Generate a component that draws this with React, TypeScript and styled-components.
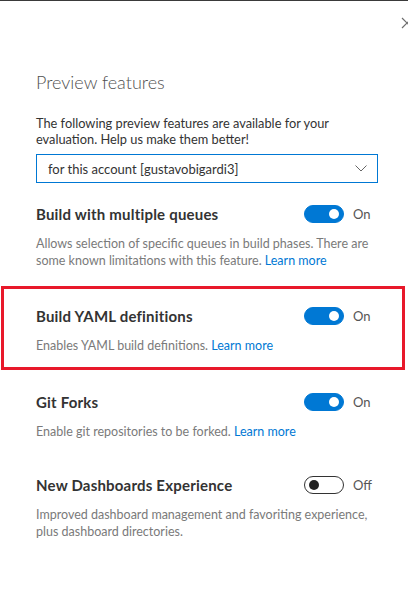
import React from "react";
import styled, { createGlobalStyle } from "styled-components";

const Global = createGlobalStyle`
  html, body { margin: 0; padding: 0; background: #ffffff; }
  body { width: 408px; height: 600px; overflow: hidden; font-family: Lato, "Open Sans", sans-serif; }
`;

const Panel = styled.div`
  position: relative;
  box-sizing: border-box;
  width: 408px;
  height: 600px;
  border-top: 1px solid #3a3a3a;
  padding: 69px 30px 0 36px;
  background: #fff;
  overflow: hidden;
`;

const CloseButton = styled.div`
  position: absolute;
  top: 12px;
  right: -5px;
  width: 12px;
  height: 12px;
  color: #6e6e6e;
`;

const Title = styled.h1`
  margin: 0;
  font-family: Lato, sans-serif;
  font-weight: 300;
  font-size: 18px;
  line-height: 24px;
  color: #505050;
`;

const Intro = styled.p`
  margin: 21px 0 0;
  font-size: 12.8px;
  line-height: 16px;
  color: #333;
`;

const Dropdown = styled.div`
  margin-top: 7px;
  box-sizing: border-box;
  height: 29px;
  border: 1px solid #0078d4;
  display: flex;
  align-items: center;
  justify-content: space-between;
  padding: 0 10px 0 11px;
  font-size: 13px;
  color: #333;
`;

const Feature = styled.section<{ $highlight?: boolean; $top: number }>`
  margin-top: ${(p) => p.$top}px;
  ${(p) =>
    p.$highlight
      ? `margin-left: -35px; margin-right: -27px; padding: 17px 24px 12px 32px; border: 3px solid #e8182a;`
      : ``}
`;

const FeatureHead = styled.div`
  display: flex;
  align-items: center;
  justify-content: space-between;
  height: 20px;
`;

const FeatureName = styled.h2`
  margin: 0;
  font-size: 15px;
  font-weight: 700;
  letter-spacing: 0.2px;
  color: #333;
`;

const ToggleWrap = styled.div`
  display: flex;
  align-items: center;
  gap: 9px;
  width: 74px;
`;

const Track = styled.div<{ $on: boolean }>`
  box-sizing: border-box;
  width: 40px;
  height: 18px;
  border-radius: 9px;
  display: flex;
  align-items: center;
  padding: 0 4px;
  justify-content: ${(p) => (p.$on ? "flex-end" : "flex-start")};
  background: ${(p) => (p.$on ? "#0078d4" : "#fff")};
  border: 1px solid ${(p) => (p.$on ? "#0078d4" : "#333")};
`;

const Knob = styled.span<{ $on: boolean }>`
  width: 10px;
  height: 10px;
  border-radius: 50%;
  background: ${(p) => (p.$on ? "#fff" : "#222")};
`;

const State = styled.span`
  font-size: 13px;
  color: #555;
`;

const Desc = styled.p`
  margin: 12px 0 0;
  font-size: 12.5px;
  line-height: 16.5px;
  color: #7a7a7a;
`;

const Link = styled.a`
  color: #0078d4;
  text-decoration: none;
`;

const Toggle = ({ on }: { on: boolean }) => (
  <ToggleWrap>
    <Track $on={on}>
      <Knob $on={on} />
    </Track>
    <State>{on ? "On" : "Off"}</State>
  </ToggleWrap>
);

type F = { name: string; desc: string; link?: boolean; on: boolean; highlight?: boolean; top: number };

const features: F[] = [
  {
    name: "Build with multiple queues",
    desc: "Allows selection of specific queues in build phases. There are some known limitations with this feature.",
    link: true,
    on: true,
    top: 21,
  },
  { name: "Build YAML definitions", desc: "Enables YAML build definitions.", link: true, on: true, highlight: true, top: 17 },
  { name: "Git Forks", desc: "Enable git repositories to be forked.", link: true, on: true, top: 22 },
  {
    name: "New Dashboards Experience",
    desc: "Improved dashboard management and favoriting experience, plus dashboard directories.",
    on: false,
    top: 35,
  },
];

export default function App() {
  return (
    <>
      <Global />
      <Panel>
        <CloseButton>
          <svg width="12" height="12" viewBox="0 0 12 12">
            <path d="M1 1 L11 11 M11 1 L1 11" stroke="currentColor" strokeWidth="1.2" fill="none" />
          </svg>
        </CloseButton>
        <Title>Preview features</Title>
        <Intro>The following preview features are available for your evaluation. Help us make them better!</Intro>
        <Dropdown>
          <span>for this account [gustavobigardi3]</span>
          <svg width="12" height="7" viewBox="0 0 12 7">
            <path d="M0.5 0.5 L6 6 L11.5 0.5" stroke="#666" strokeWidth="1" fill="none" />
          </svg>
        </Dropdown>
        {features.map((f) => (
          <Feature key={f.name} $highlight={f.highlight} $top={f.top}>
            <FeatureHead>
              <FeatureName>{f.name}</FeatureName>
              <Toggle on={f.on} />
            </FeatureHead>
            <Desc>
              {f.desc}
              {f.link && (
                <>
                  {" "}
                  <Link href="#">Learn more</Link>
                </>
              )}
            </Desc>
          </Feature>
        ))}
      </Panel>
    </>
  );
}
